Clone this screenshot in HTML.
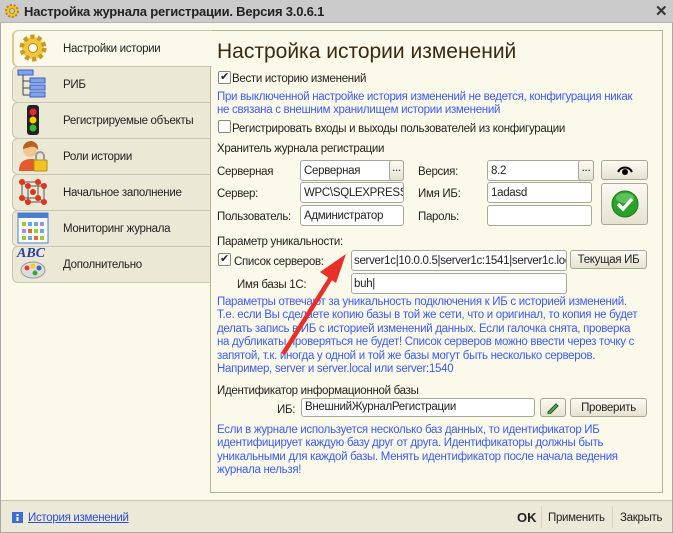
<!DOCTYPE html>
<html><head><meta charset="utf-8"><style>
*{margin:0;padding:0;box-sizing:border-box}
body{width:673px;height:533px;overflow:hidden;background:#fbf9ea;font-family:"Liberation Sans",sans-serif;font-size:11.5px;letter-spacing:-0.3px;color:#222;position:relative}
.a{position:absolute;white-space:nowrap}
.t{position:absolute;white-space:nowrap;line-height:14px;padding-top:2px}
.b{color:#3b5cf5}
.in{position:absolute;background:#fff;border:1px solid #a9a69a;border-radius:3px;height:21px;padding:4px 0 0 3px;overflow:hidden;white-space:nowrap}
.btn{position:absolute;background:linear-gradient(#fbfaf3,#e6e2cf);border:1px solid #a9a69a;border-radius:3px;text-align:center;line-height:18px}
.cb{position:absolute;width:13px;height:13px;border:1px solid #8a8778;border-radius:2px;background:#fff;font-size:11px;line-height:11px;text-align:center}
.tab{position:absolute;left:12px;width:199px;height:37px;background:#ece8d6;border:1px solid #c9c5b0;border-radius:6px 0 0 6px}
.tab span{position:absolute;left:50px;top:12px}
</style></head><body>
<div class="a" style="left:0;top:0;width:673px;height:23px;background:#cbcbcb;border-bottom:1px solid #b5b5b5"></div>
<svg class="a" style="left:4px;top:3px" width="16" height="16" viewBox="0 0 16 16"><circle cx="8" cy="8" r="6" fill="#f2c23a" stroke="#b58a10" stroke-width="2" stroke-dasharray="2.2 1.5"/><circle cx="8" cy="8" r="2.5" fill="#cbcbcb" stroke="#b58a10"/></svg>
<div class="a" style="left:24px;top:4px;font-weight:bold;font-size:13px;letter-spacing:-0.2px;color:#222">Настройка журнала регистрации. Версия 3.0.6.1</div>
<div class="a" style="left:655px;top:2px;font-size:15px;font-weight:bold;color:#333">✕</div>
<div class="a" style="left:0;top:23px;width:673px;height:510px;border:1px solid #a8a8a8;border-top:none"></div>

<div class="tab" style="top:66px"><span>РИБ</span></div>
<div class="tab" style="top:102px"><span>Регистрируемые объекты</span></div>
<div class="tab" style="top:138px"><span>Роли истории</span></div>
<div class="tab" style="top:174px"><span>Начальное заполнение</span></div>
<div class="tab" style="top:210px"><span>Мониторинг журнала</span></div>
<div class="tab" style="top:246px"><span>Дополнительно</span></div>
<div class="a" style="left:210px;top:30px;width:453px;height:463px;border:1px solid #b8b393"></div>
<div class="tab" style="top:30px;height:37px;background:#fbf9ea;border-right:none;width:200px;border-left:2px solid #e0c890"><span style="left:49px">Настройки истории</span></div>
<svg class="a" style="left:17px;top:32px" width="32" height="32" viewBox="0 0 32 32"><circle cx="16" cy="16" r="11" fill="#f3c640" stroke="#c79a20" stroke-width="5" stroke-dasharray="4 3"/><circle cx="16" cy="16" r="9" fill="#f3c640"/><circle cx="16" cy="16" r="4.5" fill="#fbf9ea" stroke="#b48a10"/></svg>
<svg class="a" style="left:17px;top:68px" width="32" height="32" viewBox="0 0 32 32"><rect x="1" y="2" width="15" height="5" fill="#7fa3ee" stroke="#3a5fc0"/><path d="M6 7v20M6 13h8M6 20h8M6 27h8" stroke="#444" fill="none"/><rect x="13" y="10" width="15" height="5" fill="#7fa3ee" stroke="#3a5fc0"/><rect x="13" y="17" width="15" height="5" fill="#7fa3ee" stroke="#3a5fc0"/><rect x="13" y="24" width="15" height="5" fill="#7fa3ee" stroke="#3a5fc0"/></svg>
<svg class="a" style="left:22px;top:104px" width="22" height="32" viewBox="0 0 22 32"><rect x="5" y="1" width="12" height="30" rx="3" fill="#222"/><circle cx="11" cy="8" r="3.5" fill="#e23"/><circle cx="11" cy="16" r="3.5" fill="#fc0"/><circle cx="11" cy="24" r="3.5" fill="#3b3"/></svg>
<svg class="a" style="left:17px;top:140px" width="32" height="32" viewBox="0 0 32 32"><path d="M2 31c0-9 5-12 12-12s12 3 12 12z" fill="#e35b2a"/><circle cx="13" cy="10" r="7" fill="#f5c590"/><path d="M6 9c0-6 5-8 8-8s8 3 7 9c-2-3-5-4-8-3z" fill="#b5621c"/><rect x="17" y="20" width="13" height="11" rx="1" fill="#f1c521" stroke="#b08a10"/><path d="M19 20v-4a4 4 0 0 1 8 0v4" stroke="#999" stroke-width="2" fill="none"/></svg>
<svg class="a" style="left:17px;top:176px" width="32" height="32" viewBox="0 0 32 32"><path d="M5 6h16v16H5zM11 10h16v16H11zM5 6l6 4M21 6l6 4M5 22l6 4M21 22l6 4" stroke="#555" fill="none"/><g fill="#e2331c"><circle cx="5" cy="6" r="3"/><circle cx="21" cy="6" r="3"/><circle cx="5" cy="22" r="3"/><circle cx="21" cy="22" r="3"/><circle cx="11" cy="10" r="3"/><circle cx="27" cy="10" r="3"/><circle cx="11" cy="26" r="3"/><circle cx="27" cy="26" r="3"/><circle cx="16" cy="16" r="3"/></g></svg>
<svg class="a" style="left:17px;top:212px" width="32" height="32" viewBox="0 0 32 32"><rect x="1" y="1" width="30" height="30" fill="#fff" stroke="#4a7fd0"/><rect x="1" y="1" width="30" height="5" fill="#4a7fd0"/><rect x="5" y="10" width="4" height="4" fill="#9c3"/><rect x="11" y="10" width="4" height="4" fill="#6ad"/><rect x="17" y="10" width="4" height="4" fill="#6ad"/><rect x="23" y="10" width="4" height="4" fill="#a8e"/><rect x="5" y="17" width="4" height="4" fill="#a8e"/><rect x="11" y="17" width="4" height="4" fill="#e63"/><rect x="17" y="17" width="4" height="4" fill="#9c3"/><rect x="23" y="17" width="4" height="4" fill="#6ad"/><rect x="5" y="24" width="4" height="4" fill="#9c3"/><rect x="11" y="24" width="4" height="4" fill="#6ad"/><rect x="17" y="24" width="4" height="4" fill="#e63"/><rect x="23" y="24" width="4" height="4" fill="#9c3"/></svg>
<div class="a" style="left:17px;top:246px;font-family:'Liberation Serif',serif;font-style:italic;font-weight:bold;font-size:14px;letter-spacing:0;color:#2a3ea0">ABC</div>
<svg class="a" style="left:20px;top:260px" width="26" height="20" viewBox="0 0 26 20"><ellipse cx="13" cy="10" rx="12" ry="8" fill="#ddd" stroke="#999"/><circle cx="7" cy="8" r="2.5" fill="#e33"/><circle cx="13" cy="6" r="2.5" fill="#fc0"/><circle cx="19" cy="8" r="2.5" fill="#36c"/><circle cx="15" cy="13" r="2.5" fill="#3a3"/></svg>

<div class="a" style="left:217px;top:40px;font-size:21px;letter-spacing:0;color:#3a2a10">Настройка истории изменений</div>
<div class="cb" style="left:218px;top:71px">✔</div>
<div class="t" style="left:232px;top:70px">Вести историю изменений</div>
<div class="t b" style="left:217px;top:88px">При выключенной настройке история изменений не ведется, конфигурация никак</div>
<div class="t b" style="left:217px;top:101px">не связана с внешним хранилищем истории изменений</div>
<div class="cb" style="left:218px;top:120px"></div>
<div class="t" style="left:232px;top:120px">Регистрировать входы и выходы пользователей из конфигурации</div>
<div class="t" style="left:217px;top:140px">Хранитель журнала регистрации</div>

<div class="t" style="left:217px;top:163px">Серверная</div>
<div class="in" style="left:300px;top:160px;width:104px">Серверная</div>
<div class="btn" style="left:389px;top:160px;width:15px;height:21px;line-height:14px">...</div>
<div class="t" style="left:418px;top:163px">Версия:</div>
<div class="in" style="left:487px;top:160px;width:107px">8.2</div>
<div class="btn" style="left:578px;top:160px;width:16px;height:21px;line-height:14px">...</div>
<div class="btn" style="left:601px;top:160px;width:47px;height:20px"><svg width="16" height="10" viewBox="0 0 16 10" style="margin-top:4px"><path d="M1 7c3-6 11-6 14 0" stroke="#000" stroke-width="2" fill="none"/><circle cx="8" cy="7" r="3" fill="#000"/></svg></div>

<div class="t" style="left:217px;top:185px">Сервер:</div>
<div class="in" style="left:300px;top:182px;width:104px">WPC\SQLEXPRESS</div>
<div class="t" style="left:418px;top:185px">Имя ИБ:</div>
<div class="in" style="left:487px;top:182px;width:105px">1adasd</div>
<div class="btn" style="left:601px;top:183px;width:47px;height:42px"><svg width="30" height="30" viewBox="0 0 30 30" style="margin-top:5px"><circle cx="15" cy="15" r="13" fill="#2aa12a" stroke="#1a7a1a"/><ellipse cx="15" cy="9" rx="9" ry="5" fill="#7fd67f" opacity=".6"/><path d="M8 15l5 5 9-10" stroke="#fff" stroke-width="3.5" fill="none"/></svg></div>

<div class="t" style="left:217px;top:208px">Пользователь:</div>
<div class="in" style="left:300px;top:205px;width:104px">Администратор</div>
<div class="t" style="left:418px;top:208px">Пароль:</div>
<div class="in" style="left:487px;top:205px;width:105px"></div>

<div class="t" style="left:217px;top:233px">Параметр уникальности:</div>
<div class="cb" style="left:218px;top:253px">✔</div>
<div class="t" style="left:234px;top:253px">Список серверов:</div>
<div class="in" style="left:351px;top:250px;width:216px;padding-left:2px">server1c|10.0.0.5|server1c:1541|server1c.loc</div>
<div class="btn" style="left:570px;top:250px;width:77px;height:19px">Текущая ИБ</div>
<div class="t" style="left:237px;top:276px">Имя базы 1С:</div>
<div class="in" style="left:351px;top:273px;width:216px;padding-left:2px">buh|</div>

<div class="b a" style="left:217px;top:296px;line-height:13.4px">Параметры отвечают за уникальность подключения к ИБ с историей изменений.<br>Т.е. если Вы сделаете копию базы в той же сети, что и оригинал, то копия не будет<br>делать запись в ИБ с историей изменений данных. Если галочка снята, проверка<br>на дубликаты проверяться не будет! Список серверов можно ввести через точку с<br>запятой, т.к. иногда у одной и той же базы могут быть несколько серверов.<br>Например, server и server.local или server:1540</div>

<div class="t" style="left:217px;top:382px">Идентификатор информационной базы</div>
<div class="t" style="left:277px;top:401px">ИБ:</div>
<div class="in" style="left:301px;top:398px;width:234px;height:19px;padding-top:2px">ВнешнийЖурналРегистрации</div>
<div class="btn" style="left:540px;top:398px;width:26px;height:19px"><svg width="14" height="12" viewBox="0 0 14 12" style="margin-top:3px"><path d="M2 10l8-8 2 2-8 8H2z" fill="#5a5" stroke="#252"/></svg></div>
<div class="btn" style="left:570px;top:398px;width:77px;height:19px">Проверить</div>

<div class="b a" style="left:217px;top:424px;line-height:13.3px">Если в журнале используется несколько баз данных, то идентификатор ИБ<br>идентифицирует каждую базу друг от друга. Идентификаторы должны быть<br>уникальными для каждой базы. Менять идентификатор после начала ведения<br>журнала нельзя!</div>

<svg class="a" style="left:0;top:0" width="673" height="533"><path d="M283 354L332 276" stroke="#e8302a" stroke-width="4.5"/><path d="M346 254L320 272L336 283z" fill="#e8302a"/></svg>

<div class="a" style="left:1px;top:500px;width:671px;height:32px;background:#ece9d8;border-top:1px solid #c8c4b0"></div>
<svg class="a" style="left:12px;top:512px" width="11" height="11"><rect width="11" height="11" fill="#3a6fd0"/><rect x="4.5" y="2" width="2" height="2" fill="#fff"/><rect x="4.5" y="5" width="2" height="4" fill="#fff"/></svg>
<div class="a" style="left:28px;top:512px;color:#2a4fd0;text-decoration:underline">История изменений</div>
<div class="a" style="left:517px;top:510px;font-weight:bold;font-size:13px;letter-spacing:0">OK</div>
<div class="a" style="left:541px;top:506px;width:1px;height:22px;background:#d5d1bd"></div>
<div class="a" style="left:548px;top:512px">Применить</div>
<div class="a" style="left:612px;top:506px;width:1px;height:22px;background:#d5d1bd"></div>
<div class="a" style="left:620px;top:512px">Закрыть</div>
</body></html>
